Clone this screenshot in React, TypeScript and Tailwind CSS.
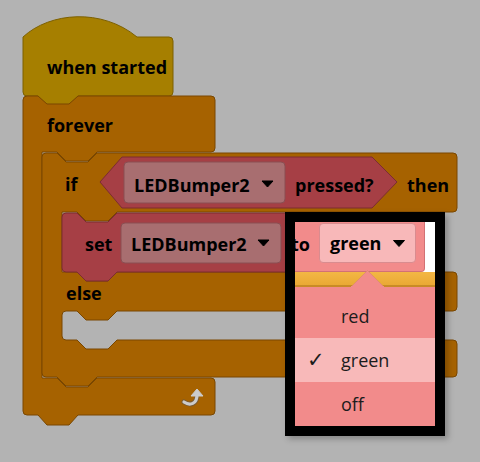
import React from "react";

const HAT =
  "M 23,37 C 50,12 102,8 137,37 L 169,37 Q 173,37 173,41 L 173,92 Q 173,96 169,96 L 78,96 l -9,9 l -22,0 l -9,-9 L 27,96 Q 23,96 23,92 Z";

const FOREVER =
  "M 27,96 L 38,96 l 9,8 l 22,0 l 9,-8 L 211,96 Q 215,96 215,100 L 215,148 Q 215,152 211,152 L 97,152 l -9,9 l -22,0 l -9,-9 L 42,152 L 42,378 L 57,378 l 9,9 l 22,0 l 9,-9 L 211,378 Q 215,378 215,382 L 215,411 Q 215,415 211,415 L 78,415 l -9,10 l -22,0 l -9,-10 L 27,415 Q 23,415 23,411 L 23,100 Q 23,96 27,96 Z";

const IF_ELSE =
  "M 46,153 L 57,153 l 9,9 l 22,0 l 9,-9 L 453,153 Q 457,153 457,157 L 457,208 Q 457,212 453,212 L 117,212 l -9,9 l -22,0 l -9,-9 L 62,212 L 62,272 L 77,272 l 9,9 l 22,0 l 9,-9 L 453,272 Q 457,272 457,276 L 457,307 Q 457,311 453,311 L 117,311 l -9,9 l -22,0 l -9,-9 L 66,311 Q 62,311 62,315 L 62,336 Q 62,340 66,340 L 77,340 l 9,9 l 22,0 l 9,-9 L 453,340 Q 457,340 457,344 L 457,373 Q 457,377 453,377 L 97,377 l -9,9 l -22,0 l -9,-9 L 46,377 Q 42,377 42,373 L 42,157 Q 42,153 46,153 Z";

const CONDITION = "M 122,157 L 372,157 L 397,182 L 372,208 L 122,208 L 100,182 Z";

const SET_BLOCK =
  "M 66,213 L 77,213 l 9,9 l 22,0 l 9,-9 L 421,213 Q 425,213 425,217 L 425,268 Q 425,272 421,272 L 117,272 l -9,9 l -22,0 l -9,-9 L 66,272 Q 62,272 62,268 L 62,217 Q 62,213 66,213 Z";

const labelClass = "fill-black font-['Open_Sans',sans-serif] text-[18px] font-bold";

function Caret({ x, y }: { x: number; y: number }) {
  return (
    <path
      d={`M ${x},${y} L ${x + 11},${y} L ${x + 5.5},${y + 6} Z`}
      fill="#000"
      stroke="#000"
      strokeWidth={1}
      strokeLinejoin="round"
    />
  );
}

function Workspace() {
  return (
    <svg width={480} height={462} viewBox="0 0 480 462" className="block">
      <path d={HAT} fill="#a67f00" stroke="#7d6000" strokeWidth={1} />
      <text x={47} y={74} className={labelClass}>
        when started
      </text>

      <path d={FOREVER} fill="#a66200" stroke="#7a4700" strokeWidth={1} />
      <text x={47} y={132} className={labelClass}>
        forever
      </text>
      {/* repeat arrow */}
      <path
        d="M 184,402 C 190,406 197,404 197,395"
        fill="none"
        stroke="#7a5a30"
        strokeWidth={5}
        strokeLinecap="round"
      />
      <path
        d="M 184,402 C 190,406 197,404 197,395"
        fill="none"
        stroke="#cbcbcb"
        strokeWidth={3.2}
        strokeLinecap="round"
      />
      <path d="M 191,396 L 197,389 L 203,396 Z" fill="#cbcbcb" stroke="#cbcbcb" strokeWidth={1} strokeLinejoin="round" />

      <path d={IF_ELSE} fill="#a66200" stroke="#7a4700" strokeWidth={1} />
      <text x={65} y={191} className={labelClass}>
        if
      </text>
      <path d={CONDITION} fill="#a63f45" stroke="#7c2c31" strokeWidth={1} />
      <rect x={124} y={162} width={161} height={41} rx={4} fill="#a86e70" stroke="#8a4e52" strokeWidth={1} />
      <text x={134} y={192} className={labelClass}>
        LEDBumper2
      </text>
      <Caret x={262} y={181} />
      <text x={295} y={192} className={labelClass}>
        pressed?
      </text>
      <text x={407} y={192} className={labelClass}>
        then
      </text>

      <path d={SET_BLOCK} fill="#a63f45" stroke="#7c2c31" strokeWidth={1} />
      <text x={85} y={251} className={labelClass}>
        set
      </text>
      <rect x={121} y={223} width={160} height={40} rx={4} fill="#a86e70" stroke="#8a4e52" strokeWidth={1} />
      <text x={131} y={251} className={labelClass}>
        LEDBumper2
      </text>
      <Caret x={258} y={240} />

      <text x={66} y={300} className={labelClass}>
        else
      </text>
    </svg>
  );
}

const options = [
  { label: "red", selected: false },
  { label: "green", selected: true },
  { label: "off", selected: false },
];

function DropdownSpotlight() {
  return (
    <div className="absolute left-[285px] top-[212px] h-[224px] w-[160px] border-[10px] border-black bg-white shadow-[3px_3px_6px_rgba(0,0,0,0.25)]">
      <div className="relative flex h-full w-full flex-col overflow-hidden">
        <div className="flex h-[50px] shrink-0">
          <div className="flex h-[50px] w-[130px] items-start rounded-br-[4px] border-b border-r border-[#d27174] bg-[#f28b8b]">
            <span className="ml-[-4px] mt-[10px] inline-block w-[28px] font-['Open_Sans',sans-serif] text-[18px] font-bold leading-[24px] text-black">
              to
            </span>
            <div className="mt-[1px] flex h-[40px] w-[97px] items-center justify-between rounded-[4px] border border-[#d98c8f] bg-[#f8b8b9] px-[10px]">
              <span className="font-['Open_Sans',sans-serif] text-[18px] font-bold leading-[24px] text-black">
                green
              </span>
              <svg width={12} height={7} viewBox="0 0 12 7" className="mt-[1px]">
                <path d="M 0.5,0.5 L 11.5,0.5 L 6,6.5 Z" fill="#000" stroke="#000" strokeLinejoin="round" />
              </svg>
            </div>
          </div>
        </div>
        <div className="h-[15px] shrink-0 border-b-2 border-[#c98b26] bg-gradient-to-b from-[#f3b744] to-[#eaa935]" />
        <div className="flex-1 bg-[#f28b8b] pt-[7px]">
          {options.map((option) => (
            <div
              key={option.label}
              className={`flex h-[44px] items-center pl-[12px] ${option.selected ? "bg-[#f8b9b9]" : ""}`}
            >
              <span className="inline-block w-[34px] font-['DejaVu_Sans',sans-serif] text-[21px] leading-[24px] text-[#1c1c1c]">
                {option.selected ? "✓" : ""}
              </span>
              <span className="font-['Open_Sans',sans-serif] text-[18px] leading-[24px] text-[#1c1c1c]">
                {option.label}
              </span>
            </div>
          ))}
        </div>
        <svg width={33} height={17} viewBox="0 0 33 17" className="absolute left-[56px] top-[48px]">
          <path d="M 0,17 L 16.5,0.5 L 33,17 Z" fill="#f28b8b" stroke="#dd8a70" strokeWidth={0.8} />
          <rect x={0} y={16} width={33} height={1} fill="#f28b8b" />
        </svg>
      </div>
    </div>
  );
}

export default function App() {
  return (
    <div className="relative h-[462px] w-[480px] overflow-hidden bg-[#b3b3b3]">
      <Workspace />
      <DropdownSpotlight />
    </div>
  );
}
